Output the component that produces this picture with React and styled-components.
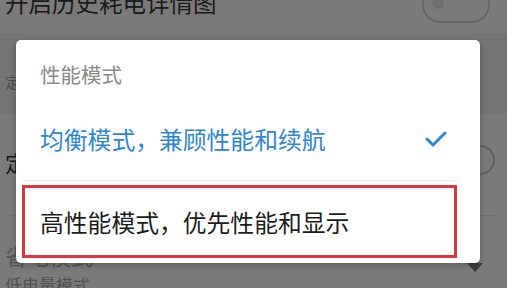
import React from 'react';
import styled, { createGlobalStyle } from 'styled-components';

const GlobalStyle = createGlobalStyle`
  html, body {
    margin: 0;
    padding: 0;
    width: 507px;
    height: 288px;
    overflow: hidden;
    background: #ffffff;
    font-family: "Noto Sans CJK SC", "Noto Sans", sans-serif;
  }
`;

const Screen = styled.div`
  position: relative;
  width: 507px;
  height: 288px;
  overflow: hidden;
  background: #f2f2f2;
`;

// settings list behind the dialog
const SettingsList = styled.div`
  display: flex;
  flex-direction: column;
`;

const TopRow = styled.div`
  height: 33px;
  display: flex;
  justify-content: space-between;
  align-items: flex-start;
  padding: 0 17px 0 5px;
  background: #ffffff;
  overflow: hidden;
`;

const RowTitle = styled.div`
  font-size: ${({ size }) => size || 23.5}px;
  line-height: 24px;
  color: ${({ muted }) => (muted ? '#b4b4b4' : '#3a3a3a')};
  white-space: nowrap;
  margin-top: ${({ offset }) => offset || 0}px;
`;

const Toggle = styled.div`
  width: 64px;
  height: 34px;
  margin-top: -15px;
  border: 2px solid #d6d6d6;
  border-radius: 18px;
  position: relative;
  &:after {
    content: '';
    position: absolute;
    left: 8px;
    top: 10px;
    width: 12px;
    height: 12px;
    border-radius: 50%;
    background: #e6e6e6;
  }
`;

const SectionHeader = styled.div`
  height: 82px;
  box-sizing: border-box;
  padding: 40px 5px 0;
  font-size: 15px;
  line-height: 18px;
  color: #a8a8a8;
`;

const Row = styled.div`
  height: ${({ h }) => h}px;
  box-sizing: border-box;
  background: #ffffff;
  display: flex;
  justify-content: space-between;
  align-items: flex-start;
  padding: ${({ pt }) => pt}px 12px 0 5px;
`;

const RowText = styled.div`
  display: flex;
  flex-direction: column;
`;

const SubText = styled.div`
  margin-top: 8px;
  font-size: 17px;
  line-height: 20px;
  color: #ababab;
`;

const Radio = styled.div`
  width: 26px;
  height: 26px;
  margin-top: -5px;
  border: 2px solid #c4c4c4;
  border-radius: 50%;
`;

const Caret = styled.div`
  width: 0;
  height: 0;
  margin-top: 20px;
  margin-right: 12px;
  border-left: 8px solid transparent;
  border-right: 8px solid transparent;
  border-top: 9px solid #808080;
`;

const Divider = styled.div`
  height: 1px;
  margin: 0 12px 0 16px;
  background: #e4e4e4;
`;

const Scrim = styled.div`
  position: absolute;
  inset: 0;
  background: rgba(0, 0, 0, 0.52);
`;

// dialog
const Dialog = styled.div`
  position: absolute;
  left: 16px;
  top: 40px;
  width: 464px;
  height: 223px;
  box-sizing: border-box;
  background: #ffffff;
  border-radius: 5px;
  box-shadow: 0 2px 6px rgba(0, 0, 0, 0.25);
  display: flex;
  flex-direction: column;
`;

const DialogTitle = styled.div`
  height: 61px;
  box-sizing: border-box;
  padding: 23px 24px 0;
  font-size: 20.5px;
  line-height: 22px;
  color: #8a8a8a;
`;

const Option = styled.div`
  height: ${({ h }) => h}px;
  box-sizing: border-box;
  margin: 0 23px 0 6px;
  padding: 0 10px 0 ${({ highlighted }) => (highlighted ? 15 : 18)}px;
  display: flex;
  align-items: center;
  justify-content: space-between;
  font-size: 23.8px;
  color: ${({ selected }) => (selected ? '#2f86d1' : '#1c1c1c')};
  border: ${({ highlighted }) => (highlighted ? '3px solid #dc353c' : 'none')};
`;

const OptionDivider = styled.div`
  height: 1px;
  margin: 4px 22px 4px 6px;
  background: #ececec;
`;

const Check = () => (
  <svg width="22" height="18" viewBox="0 0 22 18">
    <polyline
      points="2,9 8,15 20,3"
      fill="none"
      stroke="#2f86d1"
      strokeWidth="3"
      strokeLinecap="round"
      strokeLinejoin="round"
    />
  </svg>
);

const App = () => {
  return (
    <Screen>
      <GlobalStyle />
      <SettingsList>
        <TopRow>
          <RowTitle offset={-10}>开启历史耗电详情图</RowTitle>
          <Toggle />
        </TopRow>
        <SectionHeader>定时开关机</SectionHeader>
        <Row h={100} pt={35}>
          <RowTitle size={22}>定时开关机</RowTitle>
          <Radio />
        </Row>
        <Divider />
        <Row h={72} pt={27}>
          <RowText>
            <RowTitle size={22} muted>省电模式</RowTitle>
            <SubText>低电量模式</SubText>
          </RowText>
          <Caret />
        </Row>
      </SettingsList>

      <Scrim />

      <Dialog>
        <DialogTitle>性能模式</DialogTitle>
        <Option h={75} selected>
          <span>均衡模式，兼顾性能和续航</span>
          <Check />
        </Option>
        <OptionDivider />
        <Option h={73} highlighted>
          <span>高性能模式，优先性能和显示</span>
        </Option>
      </Dialog>
    </Screen>
  );
};

export default App;
